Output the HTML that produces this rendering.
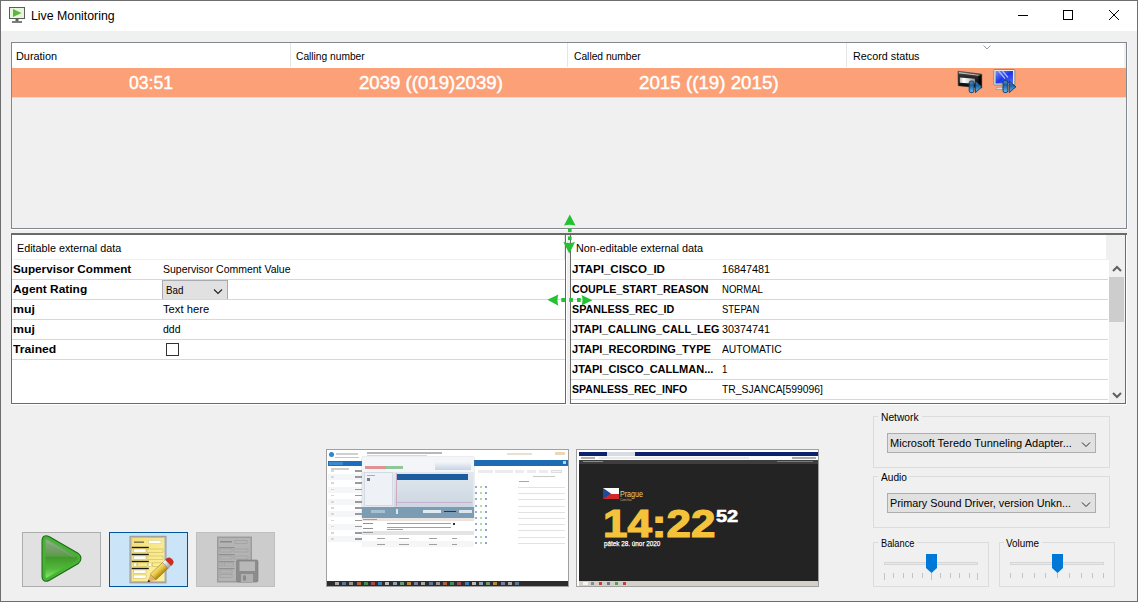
<!DOCTYPE html>
<html><head><meta charset="utf-8"><title>Live Monitoring</title>
<style>
*{margin:0;padding:0;box-sizing:border-box;}
html,body{width:1138px;height:602px;overflow:hidden;background:#f0f0f0;font-family:"Liberation Sans",sans-serif;}
.a{position:absolute;}
.t{position:absolute;white-space:nowrap;font-family:"Liberation Sans",sans-serif;}
.t{transform-origin:0 0;}

</style></head><body>
<!-- window frame -->
<div class="a" style="left:0;top:0;width:1138px;height:602px;border:1px solid #6e6e6e;"></div>
<div class="a" style="left:1px;top:1px;width:1136px;height:30px;background:#fff;"></div>
<!-- title icon -->
<svg class="a" style="left:9px;top:7px" width="16" height="16" viewBox="0 0 16 16">
  <rect x="0.5" y="0.5" width="15" height="11" fill="#e6f5dc" stroke="#5c5c5c"/>
  <path d="M4 2 L12.5 6 L4 10Z" fill="#5cb83c"/>
  <rect x="6.5" y="12" width="3" height="2" fill="#5c5c5c"/>
  <rect x="3" y="14.2" width="10" height="1.6" fill="#5c5c5c"/>
</svg>
<!-- caption buttons -->
<div class="a" style="left:1018px;top:15px;width:10px;height:1px;background:#000;"></div>
<div class="a" style="left:1063px;top:10px;width:10px;height:10px;border:1px solid #000;"></div>
<svg class="a" style="left:1108px;top:9px" width="12" height="12" viewBox="0 0 12 12"><path d="M1 1L11 11M11 1L1 11" stroke="#000" stroke-width="1"/></svg>

<!-- top list -->
<div class="a" style="left:11px;top:42px;width:1116px;height:187px;border:1px solid #828790;background:#f0f0f0;"></div>
<div class="a" style="left:12px;top:43px;width:1114px;height:25px;background:#fff;"></div>
<div class="a" style="left:290px;top:43px;width:1px;height:24px;background:#e5e5e5;"></div>
<div class="a" style="left:567px;top:43px;width:1px;height:24px;background:#e5e5e5;"></div>
<div class="a" style="left:846px;top:43px;width:1px;height:24px;background:#e5e5e5;"></div>
<svg class="a" style="left:983px;top:44.5px" width="8" height="5" viewBox="0 0 8 5"><path d="M0.5 0.5L4 4L7.5 0.5" fill="none" stroke="#9a9a9a" stroke-width="1"/></svg>
<div class="a" style="left:12px;top:68px;width:1114px;height:29px;background:#fba077;"></div>
<div class="a" style="left:12px;top:97px;width:1114px;height:1px;background:#ffd0d0;"></div>

<div class="a" style="left:11px;top:229px;width:1116px;height:1px;background:#fff;"></div>
<div class="a" style="left:1124px;top:43px;width:2px;height:25px;background:#f0f0f0;"></div>
<!-- lower frame top line -->
<div class="a" style="left:11px;top:233px;width:1116px;height:2px;background:#6a6a6a;"></div>
<div class="a" style="left:11px;top:404px;width:1116px;height:1px;background:#fff;"></div>
<div class="a" style="left:1126px;top:235px;width:1px;height:170px;background:#fff;"></div>
<div class="a" style="left:1127px;top:42px;width:1px;height:188px;background:#f8f8f8;"></div>
<!-- left panel -->
<div class="a" style="left:11px;top:233px;width:555px;height:171px;border:1px solid #6a6a6a;border-top-width:2px;background:#fff;"></div>
<div class="a" style="left:564px;top:235px;width:1px;height:24px;background:#e8e8e8;"></div>
<div class="a" style="left:12px;top:259px;width:553px;height:1px;background:#f0f0f0;"></div>
<!-- right panel -->
<div class="a" style="left:570px;top:233px;width:556px;height:171px;border:1px solid #6a6a6a;border-top-width:2px;background:#fff;"></div>
<div class="a" style="left:1106px;top:235px;width:19px;height:25px;background:#f0f0f0;"></div>
<div class="a" style="left:571px;top:259px;width:535px;height:1px;background:#f0f0f0;"></div>
<div class="a" style="left:1109px;top:260px;width:16px;height:143px;background:#f0f0f0;"></div>
<div class="a" style="left:1109px;top:277px;width:15px;height:45px;background:#cdcdcd;"></div>
<svg class="a" style="left:1112px;top:265px" width="10" height="8" viewBox="0 0 10 8"><path d="M1 6L5 2L9 6" fill="none" stroke="#606060" stroke-width="2"/></svg>
<svg class="a" style="left:1112px;top:391px" width="10" height="8" viewBox="0 0 10 8"><path d="M1 2L5 6L9 2" fill="none" stroke="#606060" stroke-width="2"/></svg>
<div class="a" style="left:12px;top:279px;width:553px;height:1px;background:#ffc8c8;"></div>
<div class="a" style="left:12px;top:299px;width:553px;height:1px;background:#ffc8c8;"></div>
<div class="a" style="left:12px;top:319px;width:553px;height:1px;background:#ffc8c8;"></div>
<div class="a" style="left:12px;top:339px;width:553px;height:1px;background:#ffc8c8;"></div>
<div class="a" style="left:12px;top:359px;width:553px;height:1px;background:#ffc8c8;"></div>
<div class="a" style="left:571px;top:279px;width:537px;height:1px;background:#ffc8c8;"></div>
<div class="a" style="left:571px;top:299px;width:537px;height:1px;background:#ffc8c8;"></div>
<div class="a" style="left:571px;top:319px;width:537px;height:1px;background:#ffc8c8;"></div>
<div class="a" style="left:571px;top:339px;width:537px;height:1px;background:#ffc8c8;"></div>
<div class="a" style="left:571px;top:359px;width:537px;height:1px;background:#ffc8c8;"></div>
<div class="a" style="left:571px;top:379px;width:537px;height:1px;background:#ffc8c8;"></div>
<div class="a" style="left:571px;top:399px;width:537px;height:1px;background:#ffc8c8;"></div>
<!-- combo Bad -->
<div class="a" style="left:162px;top:280px;width:66px;height:19px;background:#e1e1e1;border:1px solid #a9abb0;border-bottom:none;"></div>
<svg class="a" style="left:213px;top:288px" width="10" height="7" viewBox="0 0 10 7"><path d="M1 1.5L5 5.5L9 1.5" fill="none" stroke="#222" stroke-width="1.1"/></svg>
<!-- checkbox -->
<div class="a" style="left:166px;top:343px;width:13px;height:13px;border:1px solid #333;background:#fff;"></div>
<!-- splitter gap -->
<div class="a" style="left:566px;top:235px;width:4px;height:169px;background:#f0f0f0;"></div>
<div class="a" style="left:566px;top:235px;width:1px;height:169px;background:#fff;"></div>
<!-- group boxes -->
<div class="a" style="left:873px;top:416px;width:237px;height:52px;border:1px solid #dcdcdc;"></div>
<div class="a" style="left:878px;top:410px;width:44px;height:12px;background:#f0f0f0;"></div>
<div class="a" style="left:887px;top:433px;width:209px;height:20px;background:#e1e1e1;border:1px solid #adadad;"></div>
<svg class="a" style="left:1081px;top:441px" width="10" height="7" viewBox="0 0 10 7"><path d="M1 1.5L5 5.5L9 1.5" fill="none" stroke="#2a2a2a" stroke-width="1"/></svg>

<div class="a" style="left:873px;top:476px;width:237px;height:52px;border:1px solid #dcdcdc;"></div>
<div class="a" style="left:878px;top:470px;width:31px;height:12px;background:#f0f0f0;"></div>
<div class="a" style="left:887px;top:493px;width:209px;height:20px;background:#e1e1e1;border:1px solid #adadad;"></div>
<svg class="a" style="left:1081px;top:501px" width="10" height="7" viewBox="0 0 10 7"><path d="M1 1.5L5 5.5L9 1.5" fill="none" stroke="#2a2a2a" stroke-width="1"/></svg>

<div class="a" style="left:873px;top:542px;width:116px;height:45px;border:1px solid #dcdcdc;"></div>
<div class="a" style="left:878px;top:536px;width:39px;height:12px;background:#f0f0f0;"></div>
<div class="a" style="left:884px;top:562px;width:94px;height:3px;background:#e7eaea;border:1px solid #d6d6d6;"></div>
<svg class="a" style="left:926px;top:554px" width="11" height="19" viewBox="0 0 11 19"><path d="M0 0H11V14L5.5 19L0 14Z" fill="#0078d7"/></svg>

<div class="a" style="left:999px;top:542px;width:116px;height:45px;border:1px solid #dcdcdc;"></div>
<div class="a" style="left:1004px;top:536px;width:38px;height:12px;background:#f0f0f0;"></div>
<div class="a" style="left:1010px;top:562px;width:94px;height:3px;background:#e7eaea;border:1px solid #d6d6d6;"></div>
<svg class="a" style="left:1052px;top:554px" width="11" height="19" viewBox="0 0 11 19"><path d="M0 0H11V14L5.5 19L0 14Z" fill="#0078d7"/></svg>

<div class="a" style="left:884px;top:573px;width:1px;height:7px;background:#c4c4c4;"></div>
<div class="a" style="left:893px;top:573px;width:1px;height:5px;background:#c4c4c4;"></div>
<div class="a" style="left:903px;top:573px;width:1px;height:5px;background:#c4c4c4;"></div>
<div class="a" style="left:912px;top:573px;width:1px;height:5px;background:#c4c4c4;"></div>
<div class="a" style="left:922px;top:573px;width:1px;height:5px;background:#c4c4c4;"></div>
<div class="a" style="left:931px;top:573px;width:1px;height:7px;background:#c4c4c4;"></div>
<div class="a" style="left:940px;top:573px;width:1px;height:5px;background:#c4c4c4;"></div>
<div class="a" style="left:950px;top:573px;width:1px;height:5px;background:#c4c4c4;"></div>
<div class="a" style="left:959px;top:573px;width:1px;height:5px;background:#c4c4c4;"></div>
<div class="a" style="left:969px;top:573px;width:1px;height:5px;background:#c4c4c4;"></div>
<div class="a" style="left:977px;top:573px;width:1px;height:7px;background:#c4c4c4;"></div>
<div class="a" style="left:1010px;top:573px;width:1px;height:5px;background:#c4c4c4;"></div>
<div class="a" style="left:1022px;top:573px;width:1px;height:5px;background:#c4c4c4;"></div>
<div class="a" style="left:1034px;top:573px;width:1px;height:5px;background:#c4c4c4;"></div>
<div class="a" style="left:1045px;top:573px;width:1px;height:5px;background:#c4c4c4;"></div>
<div class="a" style="left:1057px;top:573px;width:1px;height:5px;background:#c4c4c4;"></div>
<div class="a" style="left:1069px;top:573px;width:1px;height:5px;background:#c4c4c4;"></div>
<div class="a" style="left:1081px;top:573px;width:1px;height:5px;background:#c4c4c4;"></div>
<div class="a" style="left:1092px;top:573px;width:1px;height:5px;background:#c4c4c4;"></div>
<div class="a" style="left:1103px;top:573px;width:1px;height:5px;background:#c4c4c4;"></div>
<!-- bottom buttons -->
<div class="a" style="left:22px;top:532px;width:79px;height:55px;background:#e1e1e1;border:1px solid #adadad;"></div>
<div class="a" style="left:109px;top:532px;width:79px;height:55px;background:#cce4f7;border:1px solid #005499;"></div>
<div class="a" style="left:196px;top:532px;width:79px;height:55px;background:#cccccc;border:1px solid #bfbfbf;"></div>

<!-- thumbnails -->
<div class="a" style="left:326px;top:449px;width:243px;height:138px;border:1px solid #a0a0a0;background:#fff;overflow:hidden;">
 <div class="a" style="left:2px;top:2px;width:5px;height:5px;border-radius:50%;background:#2f86c8;"></div>
 <div class="a" style="left:9px;top:3px;width:22px;height:2px;background:#d0d0d0;"></div>
 <div class="a" style="left:8px;top:7px;width:24px;height:1px;background:#c0c8d8;"></div>
 <div class="a" style="left:40px;top:2px;width:75px;height:1.5px;background:#b8b8b8;"></div>
 <div class="a" style="left:40px;top:5px;width:60px;height:1px;background:#d8d8d8;"></div>
 <div class="a" style="left:180px;top:3px;width:25px;height:2px;background:#e8e0d0;"></div>
 <div class="a" style="left:228px;top:2px;width:10px;height:3px;background:#e8d8b8;"></div>
 <div class="a" style="left:1px;top:11px;width:34px;height:5px;background:#1a6fbf;"></div>
 <div class="a" style="left:2px;top:12px;width:14px;height:3px;background:#3a8ad0;"></div>
 <div class="a" style="left:147px;top:10px;width:94px;height:6px;background:#1c6bb3;"></div>
 <div class="a" style="left:236px;top:11px;width:3px;height:3px;background:#b8d4ee;"></div>
 <div class="a" style="left:4px;top:18px;width:18px;height:2px;background:#cfcfcf;"></div>
 <div class="a" style="left:151px;top:20px;width:15px;height:3px;background:#ececec;"></div>
 <div class="a" style="left:168px;top:20px;width:18px;height:3px;background:#ececec;"></div>
 <div class="a" style="left:188px;top:20px;width:9px;height:3px;background:#ececec;"></div>
 <div class="a" style="left:200px;top:20px;width:9px;height:3px;background:#ececec;"></div>
 <div class="a" style="left:212px;top:20px;width:9px;height:3px;background:#ececec;"></div>
 <div class="a" style="left:224px;top:20px;width:11px;height:3px;background:#f4f4f4;border:0.5px solid #ddd;"></div>
 <div class="a" style="left:206px;top:26px;width:22px;height:1px;background:#c8c8c8;"></div>
 <div class="a" style="left:192px;top:31px;width:10px;height:1px;background:#a8a8a8;"></div>
 <div class="a" style="left:1px;top:24.2px;width:146px;height:6px;background:#f4f6f8;"></div>
 <div class="a" style="left:1px;top:36.6px;width:146px;height:6px;background:#f4f6f8;"></div>
 <div class="a" style="left:1px;top:49.0px;width:146px;height:6px;background:#f4f6f8;"></div>
 <div class="a" style="left:1px;top:61.4px;width:146px;height:6px;background:#f4f6f8;"></div>
 <div class="a" style="left:1px;top:73.8px;width:146px;height:6px;background:#f4f6f8;"></div>
 <div class="a" style="left:1px;top:86.2px;width:146px;height:6px;background:#f4f6f8;"></div>
 <div class="a" style="left:28px;top:20.0px;width:14px;height:1.5px;background:#9a9a9a;"></div>
 <div class="a" style="left:4px;top:20.0px;width:3px;height:1.5px;background:#d8d8d8;"></div>
 <div class="a" style="left:28px;top:26.2px;width:14px;height:1.5px;background:#9a9a9a;"></div>
 <div class="a" style="left:4px;top:26.2px;width:3px;height:1.5px;background:#d8d8d8;"></div>
 <div class="a" style="left:28px;top:32.4px;width:14px;height:1.5px;background:#9a9a9a;"></div>
 <div class="a" style="left:4px;top:32.4px;width:3px;height:1.5px;background:#d8d8d8;"></div>
 <div class="a" style="left:28px;top:38.6px;width:14px;height:1.5px;background:#9a9a9a;"></div>
 <div class="a" style="left:4px;top:38.6px;width:3px;height:1.5px;background:#d8d8d8;"></div>
 <div class="a" style="left:28px;top:44.8px;width:14px;height:1.5px;background:#9a9a9a;"></div>
 <div class="a" style="left:4px;top:44.8px;width:3px;height:1.5px;background:#d8d8d8;"></div>
 <div class="a" style="left:28px;top:51.0px;width:14px;height:1.5px;background:#9a9a9a;"></div>
 <div class="a" style="left:4px;top:51.0px;width:3px;height:1.5px;background:#d8d8d8;"></div>
 <div class="a" style="left:28px;top:57.2px;width:14px;height:1.5px;background:#9a9a9a;"></div>
 <div class="a" style="left:4px;top:57.2px;width:3px;height:1.5px;background:#d8d8d8;"></div>
 <div class="a" style="left:28px;top:63.4px;width:14px;height:1.5px;background:#9a9a9a;"></div>
 <div class="a" style="left:4px;top:63.4px;width:3px;height:1.5px;background:#d8d8d8;"></div>
 <div class="a" style="left:28px;top:69.6px;width:14px;height:1.5px;background:#9a9a9a;"></div>
 <div class="a" style="left:4px;top:69.6px;width:3px;height:1.5px;background:#d8d8d8;"></div>
 <div class="a" style="left:28px;top:75.8px;width:14px;height:1.5px;background:#9a9a9a;"></div>
 <div class="a" style="left:4px;top:75.8px;width:3px;height:1.5px;background:#d8d8d8;"></div>
 <div class="a" style="left:28px;top:82.0px;width:14px;height:1.5px;background:#9a9a9a;"></div>
 <div class="a" style="left:4px;top:82.0px;width:3px;height:1.5px;background:#d8d8d8;"></div>
 <div class="a" style="left:28px;top:88.2px;width:14px;height:1.5px;background:#9a9a9a;"></div>
 <div class="a" style="left:4px;top:88.2px;width:3px;height:1.5px;background:#d8d8d8;"></div>
 <div class="a" style="left:148px;top:36.0px;width:2px;height:2px;background:#4a78b0;opacity:0.6;"></div>
 <div class="a" style="left:153px;top:36.0px;width:2px;height:2px;background:#7ac07a;opacity:0.6;"></div>
 <div class="a" style="left:158px;top:36.0px;width:2px;height:2px;background:#3a6aa8;opacity:0.6;"></div>
 <div class="a" style="left:191px;top:37.0px;width:47px;height:1px;background:#e2e2e2;"></div>
 <div class="a" style="left:148px;top:42.2px;width:2px;height:2px;background:#4a78b0;opacity:0.6;"></div>
 <div class="a" style="left:153px;top:42.2px;width:2px;height:2px;background:#7ac07a;opacity:0.6;"></div>
 <div class="a" style="left:158px;top:42.2px;width:2px;height:2px;background:#3a6aa8;opacity:0.6;"></div>
 <div class="a" style="left:191px;top:43.2px;width:47px;height:1px;background:#e2e2e2;"></div>
 <div class="a" style="left:148px;top:48.4px;width:2px;height:2px;background:#4a78b0;opacity:0.6;"></div>
 <div class="a" style="left:153px;top:48.4px;width:2px;height:2px;background:#7ac07a;opacity:0.6;"></div>
 <div class="a" style="left:158px;top:48.4px;width:2px;height:2px;background:#3a6aa8;opacity:0.6;"></div>
 <div class="a" style="left:191px;top:49.4px;width:47px;height:1px;background:#e2e2e2;"></div>
 <div class="a" style="left:148px;top:54.6px;width:2px;height:2px;background:#4a78b0;opacity:0.6;"></div>
 <div class="a" style="left:153px;top:54.6px;width:2px;height:2px;background:#7ac07a;opacity:0.6;"></div>
 <div class="a" style="left:158px;top:54.6px;width:2px;height:2px;background:#3a6aa8;opacity:0.6;"></div>
 <div class="a" style="left:191px;top:55.6px;width:47px;height:1px;background:#e2e2e2;"></div>
 <div class="a" style="left:148px;top:60.8px;width:2px;height:2px;background:#4a78b0;opacity:0.6;"></div>
 <div class="a" style="left:153px;top:60.8px;width:2px;height:2px;background:#7ac07a;opacity:0.6;"></div>
 <div class="a" style="left:158px;top:60.8px;width:2px;height:2px;background:#3a6aa8;opacity:0.6;"></div>
 <div class="a" style="left:191px;top:61.8px;width:47px;height:1px;background:#e2e2e2;"></div>
 <div class="a" style="left:148px;top:67.0px;width:2px;height:2px;background:#4a78b0;opacity:0.6;"></div>
 <div class="a" style="left:153px;top:67.0px;width:2px;height:2px;background:#7ac07a;opacity:0.6;"></div>
 <div class="a" style="left:158px;top:67.0px;width:2px;height:2px;background:#3a6aa8;opacity:0.6;"></div>
 <div class="a" style="left:191px;top:68.0px;width:47px;height:1px;background:#e2e2e2;"></div>
 <div class="a" style="left:148px;top:73.2px;width:2px;height:2px;background:#4a78b0;opacity:0.6;"></div>
 <div class="a" style="left:153px;top:73.2px;width:2px;height:2px;background:#7ac07a;opacity:0.6;"></div>
 <div class="a" style="left:158px;top:73.2px;width:2px;height:2px;background:#3a6aa8;opacity:0.6;"></div>
 <div class="a" style="left:191px;top:74.2px;width:47px;height:1px;background:#e2e2e2;"></div>
 <div class="a" style="left:148px;top:79.4px;width:2px;height:2px;background:#4a78b0;opacity:0.6;"></div>
 <div class="a" style="left:153px;top:79.4px;width:2px;height:2px;background:#7ac07a;opacity:0.6;"></div>
 <div class="a" style="left:158px;top:79.4px;width:2px;height:2px;background:#3a6aa8;opacity:0.6;"></div>
 <div class="a" style="left:191px;top:80.4px;width:47px;height:1px;background:#e2e2e2;"></div>
 <div class="a" style="left:148px;top:85.6px;width:2px;height:2px;background:#4a78b0;opacity:0.6;"></div>
 <div class="a" style="left:153px;top:85.6px;width:2px;height:2px;background:#7ac07a;opacity:0.6;"></div>
 <div class="a" style="left:158px;top:85.6px;width:2px;height:2px;background:#3a6aa8;opacity:0.6;"></div>
 <div class="a" style="left:191px;top:86.6px;width:47px;height:1px;background:#e2e2e2;"></div>
 <div class="a" style="left:148px;top:91.8px;width:2px;height:2px;background:#4a78b0;opacity:0.6;"></div>
 <div class="a" style="left:153px;top:91.8px;width:2px;height:2px;background:#7ac07a;opacity:0.6;"></div>
 <div class="a" style="left:158px;top:91.8px;width:2px;height:2px;background:#3a6aa8;opacity:0.6;"></div>
 <div class="a" style="left:191px;top:92.8px;width:47px;height:1px;background:#e2e2e2;"></div>
 <div class="a" style="left:35px;top:7px;width:112px;height:62px;background:#e4eaf0;box-shadow:0 0 1px #8a9aa8;"></div>
 <div class="a" style="left:35px;top:7px;width:112px;height:15px;background:#f3f5f8;"></div>
 <div class="a" style="left:38px;top:15.5px;width:21px;height:3px;background:#d65050;opacity:0.6;"></div>
 <div class="a" style="left:59px;top:15.5px;width:17px;height:3px;background:#50a858;opacity:0.6;"></div>
 <div class="a" style="left:108px;top:12px;width:36px;height:8px;background:linear-gradient(#f3f5f8,#c6d4e4);"></div>
 <div class="a" style="left:37px;top:22px;width:29px;height:34px;background:#eef2f6;border:1px solid #d4dae2;"></div>
 <div class="a" style="left:40px;top:25px;width:8px;height:1px;background:#aab;"></div>
 <div class="a" style="left:40px;top:28px;width:3px;height:3px;background:#778;"></div>
 <div class="a" style="left:67px;top:22px;width:79px;height:35px;background:linear-gradient(#e2e8ee,#cbd6e0);"></div>
 <div class="a" style="left:69px;top:23px;width:1px;height:33px;background:#d0a8c0;"></div>
 <div class="a" style="left:70px;top:24px;width:71px;height:6px;background:#1b5d9f;"></div>
 <div class="a" style="left:69px;top:52px;width:76px;height:1px;background:#c8b0d0;"></div>
 <div class="a" style="left:35px;top:57px;width:112px;height:11px;background:#7c9cb4;"></div>
 <div class="a" style="left:44px;top:60px;width:14px;height:3px;background:#a8c0d0;"></div>
 <div class="a" style="left:69px;top:59px;width:2px;height:5px;background:#d8e4ee;"></div>
 <div class="a" style="left:96px;top:60px;width:18px;height:3px;background:#e0eaf2;"></div>
 <div class="a" style="left:117px;top:61px;width:12px;height:1px;background:#1c3c58;"></div>
 <div class="a" style="left:132px;top:60px;width:13px;height:3px;background:#d8e4ee;"></div>
 <div class="a" style="left:35px;top:68px;width:112px;height:3px;background:#ebe3df;"></div>
 <div class="a" style="left:36px;top:69px;width:14px;height:1px;background:#a0a0a0;"></div>
 <div class="a" style="left:35px;top:71px;width:112px;height:10px;background:#fff;"></div>
 <div class="a" style="left:36px;top:73px;width:10px;height:1px;background:#909090;"></div>
 <div class="a" style="left:36px;top:78px;width:10px;height:1px;background:#909090;"></div>
 <div class="a" style="left:60px;top:73px;width:64px;height:1px;background:#a0a0a0;"></div>
 <div class="a" style="left:60px;top:77px;width:64px;height:1px;background:#a0a0a0;"></div>
 <div class="a" style="left:60px;top:79px;width:16px;height:1px;background:#a0a0a0;"></div>
 <div class="a" style="left:126px;top:73px;width:2px;height:2px;background:#333;"></div>
 <div class="a" style="left:35px;top:81px;width:112px;height:4px;background:#e4e4e4;"></div>
 <div class="a" style="left:36px;top:82px;width:10px;height:1px;background:#999;"></div>
 <div class="a" style="left:35px;top:85px;width:112px;height:12px;background:#fff;"></div>
 <div class="a" style="left:35px;top:91px;width:112px;height:6px;background:#f4f6f8;"></div>
 <div class="a" style="left:50px;top:88px;width:8px;height:1px;background:#a0a0a0;"></div>
 <div class="a" style="left:72px;top:88px;width:10px;height:1px;background:#a0a0a0;"></div>
 <div class="a" style="left:102px;top:88px;width:8px;height:1px;background:#a0a0a0;"></div>
 <div class="a" style="left:125px;top:88px;width:5px;height:1px;background:#a0a0a0;"></div>
 <div class="a" style="left:50px;top:94px;width:8px;height:1px;background:#a0a0a0;"></div>
 <div class="a" style="left:72px;top:94px;width:10px;height:1px;background:#a0a0a0;"></div>
 <div class="a" style="left:102px;top:94px;width:8px;height:1px;background:#a0a0a0;"></div>
 <div class="a" style="left:125px;top:94px;width:5px;height:1px;background:#a0a0a0;"></div>
 <div class="a" style="left:0px;top:131px;width:241px;height:5px;background:#2c2c2c;"></div>
 <div class="a" style="left:8.0px;top:132px;width:4px;height:3px;background:#c8c8c8;opacity:0.8;"></div>
 <div class="a" style="left:15.2px;top:132px;width:4px;height:3px;background:#6a8ab0;opacity:0.8;"></div>
 <div class="a" style="left:22.4px;top:132px;width:4px;height:3px;background:#b0b0b0;opacity:0.8;"></div>
 <div class="a" style="left:29.6px;top:132px;width:4px;height:3px;background:#d07040;opacity:0.8;"></div>
 <div class="a" style="left:36.8px;top:132px;width:4px;height:3px;background:#50a060;opacity:0.8;"></div>
 <div class="a" style="left:44.0px;top:132px;width:4px;height:3px;background:#c05050;opacity:0.8;"></div>
 <div class="a" style="left:51.2px;top:132px;width:4px;height:3px;background:#4a90d0;opacity:0.8;"></div>
 <div class="a" style="left:58.4px;top:132px;width:4px;height:3px;background:#e0e0e0;opacity:0.8;"></div>
 <div class="a" style="left:65.6px;top:132px;width:4px;height:3px;background:#a0c0e0;opacity:0.8;"></div>
 <div class="a" style="left:72.8px;top:132px;width:4px;height:3px;background:#80b080;opacity:0.8;"></div>
 <div class="a" style="left:80.0px;top:132px;width:4px;height:3px;background:#d8a040;opacity:0.8;"></div>
 <div class="a" style="left:87.2px;top:132px;width:4px;height:3px;background:#9090c0;opacity:0.8;"></div>
 <div class="a" style="left:94.4px;top:132px;width:4px;height:3px;background:#c8c8c8;opacity:0.8;"></div>
 <div class="a" style="left:101.6px;top:132px;width:4px;height:3px;background:#6a8ab0;opacity:0.8;"></div>
 <div class="a" style="left:108.8px;top:132px;width:4px;height:3px;background:#b0b0b0;opacity:0.8;"></div>
 <div class="a" style="left:116.0px;top:132px;width:4px;height:3px;background:#d07040;opacity:0.8;"></div>
 <div class="a" style="left:123.2px;top:132px;width:4px;height:3px;background:#50a060;opacity:0.8;"></div>
 <div class="a" style="left:130.4px;top:132px;width:4px;height:3px;background:#c05050;opacity:0.8;"></div>
 <div class="a" style="left:137.6px;top:132px;width:4px;height:3px;background:#4a90d0;opacity:0.8;"></div>
 <div class="a" style="left:144.8px;top:132px;width:4px;height:3px;background:#e0e0e0;opacity:0.8;"></div>
 <div class="a" style="left:152.0px;top:132px;width:4px;height:3px;background:#a0c0e0;opacity:0.8;"></div>
 <div class="a" style="left:159.2px;top:132px;width:4px;height:3px;background:#80b080;opacity:0.8;"></div>
 <div class="a" style="left:166.4px;top:132px;width:4px;height:3px;background:#d8a040;opacity:0.8;"></div>
 <div class="a" style="left:173.6px;top:132px;width:4px;height:3px;background:#9090c0;opacity:0.8;"></div>
 <div class="a" style="left:180.8px;top:132px;width:4px;height:3px;background:#c8c8c8;opacity:0.8;"></div>
 <div class="a" style="left:188.0px;top:132px;width:4px;height:3px;background:#6a8ab0;opacity:0.8;"></div>
</div>
<div class="a" style="left:576px;top:449px;width:243px;height:138px;border:1px solid #a0a0a0;background:#fff;overflow:hidden;">
 <div class="a" style="left:2px;top:2px;width:239px;height:4px;background:#0c226e;"></div>
 <div class="a" style="left:30px;top:2px;width:28px;height:4px;background:#d8dce4;"></div>
 <div class="a" style="left:2px;top:6px;width:239px;height:4px;background:#fafafa;"></div>
 <div class="a" style="left:4px;top:7px;width:14px;height:2px;background:#b0b0b0;"></div>
 <div class="a" style="left:22px;top:7px;width:150px;height:2px;background:#e8e8e8;"></div>
 <div class="a" style="left:215px;top:7px;width:24px;height:2px;background:#a8a8a8;"></div>
 <div class="a" style="left:2px;top:10px;width:239px;height:4px;background:#3e3e3e;"></div>
 <div class="a" style="left:6px;top:11px;width:20px;height:1px;background:#8a8a8a;"></div>
 <div class="a" style="left:200px;top:11px;width:36px;height:1px;background:#7a7a7a;"></div>
 <div class="a" style="left:2px;top:14px;width:239px;height:117px;background:#232323;"></div>
 <div class="a" style="left:2px;top:131px;width:239px;height:5px;background:#d4d0c8;"></div>
 <div class="a" style="left:14px;top:132px;width:3px;height:3px;background:#888;"></div>
 <div class="a" style="left:22px;top:132px;width:3px;height:3px;background:#c04040;"></div>
 <div class="a" style="left:30px;top:132px;width:3px;height:3px;background:#777;"></div>
 <div class="a" style="left:38px;top:132px;width:3px;height:3px;background:#50a050;"></div>
 <div class="a" style="left:46px;top:132px;width:3px;height:3px;background:#c04040;"></div>
 <div class="a" style="left:6px;top:132px;width:5px;height:3px;background:#f4f4f4;"></div>
 <div class="a" style="left:26px;top:38px;width:16px;height:11px;background:linear-gradient(#fafafa 0,#fafafa 50%,#d02828 50%,#d02828 100%);"></div>
 <svg class="a" style="left:26px;top:38px" width="9" height="11"><path d="M0 0L8 5.5L0 11Z" fill="#1e4a9a"/></svg>
</div>
<!-- record status icons -->
<svg class="a" style="left:954px;top:66px" width="32" height="32" viewBox="0 0 32 32">
  <defs>
    <linearGradient id="bv" x1="0" y1="0" x2="0" y2="1"><stop offset="0" stop-color="#5a8fc0"/><stop offset="0.35" stop-color="#1d5f9f"/><stop offset="1" stop-color="#5ebcf5"/></linearGradient>
    <linearGradient id="cas" x1="0" y1="0" x2="0" y2="1"><stop offset="0" stop-color="#b0b0b0"/><stop offset="0.18" stop-color="#3a3a3a"/><stop offset="0.5" stop-color="#1a1a1a"/><stop offset="1" stop-color="#0c0c0c"/></linearGradient>
    <linearGradient id="reel" x1="0" y1="0" x2="1" y2="0"><stop offset="0" stop-color="#bdbdbd"/><stop offset="0.25" stop-color="#ffffff"/><stop offset="0.6" stop-color="#d8d8d8"/><stop offset="1" stop-color="#8a8a8a"/></linearGradient>
  </defs>
  <path d="M4 5.3 L27.7 8.2 L27.7 22 L4.3 19.7 Z" fill="url(#cas)" stroke="#222" stroke-width="0.6"/>
  <path d="M5 6.8 L26.5 9.5" stroke="#d0d0d0" stroke-width="0.9"/>
  <path d="M24.5 9.5 L27.3 9 L27.3 21.5 L24.5 21 Z" fill="#050505"/>
  <path d="M5.8 11.5 L21 12.8 L21 17.8 L5.8 16.8 Z" fill="url(#reel)"/>
  <rect x="15.2" y="15" width="4.8" height="11.6" rx="1.8" fill="url(#bv)" stroke="#0f3a68" stroke-width="0.9"/>
  <path d="M21.4 15.2 L28 20.8 L21.4 26.6 Z" fill="url(#bv)" stroke="#0f3a68" stroke-width="0.9" stroke-linejoin="round"/>
</svg>
<svg class="a" style="left:990px;top:66px" width="32" height="32" viewBox="0 0 32 32">
  <defs>
    <linearGradient id="scr" x1="0" y1="0" x2="1" y2="1"><stop offset="0" stop-color="#7a90f0"/><stop offset="0.5" stop-color="#1e36e8"/><stop offset="1" stop-color="#5870ee"/></linearGradient>
  </defs>
  <rect x="3.8" y="3.5" width="21" height="15.5" rx="0.8" fill="#e8e8e8" stroke="#7a7a7a" stroke-width="0.8"/>
  <rect x="5.5" y="5" width="17.5" height="12.5" fill="url(#scr)"/>
  <path d="M8.5 5 L15 12.5 M12.5 5 L18 11.5" stroke="#a8b8ff" stroke-width="1.3"/>
  <path d="M11 19 L13.5 19 L13.5 21 L6.5 21.5 L5.8 23.5 L13.5 23.5 Z" fill="#dcdcdc" stroke="#8a8a8a" stroke-width="0.6"/>
  <rect x="13" y="14.6" width="4.8" height="12" rx="1.8" fill="url(#bv)" stroke="#0f3a68" stroke-width="0.9"/>
  <path d="M19.2 15 L26 20.8 L19.2 26.6 Z" fill="url(#bv)" stroke="#0f3a68" stroke-width="0.9" stroke-linejoin="round"/>
</svg>
<!-- play icon -->
<svg class="a" style="left:35px;top:532px" width="50" height="54" viewBox="0 0 50 54">
  <defs>
    <linearGradient id="pg" x1="0" y1="0" x2="0" y2="1">
      <stop offset="0" stop-color="#92aa8c"/><stop offset="0.44" stop-color="#5d9a4c"/>
      <stop offset="0.47" stop-color="#3f9a28"/><stop offset="0.75" stop-color="#52b83a"/><stop offset="1" stop-color="#8cf06c"/>
    </linearGradient>
  </defs>
  <path d="M9 9 Q9 4 13.5 6.5 L42 23 Q46 26.5 42 30 L13.5 46.5 Q9 49 9 44 Z" fill="none" stroke="#1c6a15" stroke-width="5" stroke-linejoin="round"/>
  <path d="M9 9 Q9 4 13.5 6.5 L42 23 Q46 26.5 42 30 L13.5 46.5 Q9 49 9 44 Z" fill="url(#pg)" stroke="#48b236" stroke-width="3" stroke-linejoin="round"/>
  <path d="M12 9.5 L40 25.5" stroke="#a8d8a0" stroke-width="0.8" opacity="0.3"/>
</svg>
<!-- edit form icon -->
<svg class="a" style="left:126px;top:533px" width="50" height="52" viewBox="0 0 50 52">
  <defs>
    <linearGradient id="yf" x1="0" y1="0" x2="1" y2="1"><stop offset="0" stop-color="#f3df78"/><stop offset="1" stop-color="#fdf2a0"/></linearGradient>
    <linearGradient id="pen" x1="0" y1="0" x2="0" y2="1"><stop offset="0" stop-color="#f8e27a"/><stop offset="0.45" stop-color="#e8c440"/><stop offset="1" stop-color="#a88418"/></linearGradient>
    <linearGradient id="fer" x1="0" y1="0" x2="0" y2="1"><stop offset="0" stop-color="#ffffff"/><stop offset="1" stop-color="#a0a0a0"/></linearGradient>
  </defs>
  <rect x="3.5" y="2.8" width="37" height="47.5" fill="#9a9a9a"/>
  <rect x="4.5" y="3.8" width="35" height="45.5" fill="#bcbcbc"/>
  <rect x="5.8" y="5" width="32.5" height="43" fill="url(#yf)"/>
  <rect x="8" y="8.5" width="10" height="1.3" fill="#6a6040"/>
  <rect x="22.5" y="7.3" width="12.5" height="3.2" fill="#fff" stroke="#d6c878" stroke-width="0.5"/>
  <g fill="#1a1a1a">
    <rect x="5.8" y="13.8" width="17" height="1.4"/><rect x="5.8" y="20.8" width="17" height="1.4"/>
    <rect x="5.8" y="27.8" width="17" height="1.4"/><rect x="5.8" y="34.8" width="17" height="1.4"/>
  </g>
  <g fill="#fff" stroke="#c8b860" stroke-width="0.5">
    <rect x="7.5" y="16" width="12.5" height="3.2"/><rect x="7.5" y="23" width="12.5" height="3.2"/>
    <rect x="7.5" y="30" width="3.2" height="3.2"/><rect x="22.5" y="30" width="3.2" height="3.2"/>
    <rect x="7.5" y="37" width="12.5" height="3.2"/><rect x="7.5" y="42" width="12.5" height="3.2"/>
  </g>
  <g fill="none" stroke="#cdbb5a" stroke-width="0.6">
    <rect x="21" y="16" width="16" height="3.5"/><rect x="21" y="23" width="16" height="3.5"/>
    <rect x="11.5" y="29.8" width="10" height="3.5"/><rect x="26.5" y="29.8" width="10.5" height="3.5"/>
  </g>
  <g transform="translate(21.6 49.2) rotate(-43.4)">
    <path d="M0 0 L7.5 -4 L7.5 4 Z" fill="#e8b070"/>
    <path d="M0 0 L2.6 -1.4 L2.6 1.4 Z" fill="#2a2a2a"/>
    <rect x="7.5" y="-4" width="17" height="8" fill="url(#pen)" stroke="#8a6c10" stroke-width="0.5"/>
    <rect x="24.5" y="-4" width="4" height="8" fill="url(#fer)" stroke="#888" stroke-width="0.4"/>
    <path d="M28.5 -4 L30.5 -4 Q33.5 -3.5 33.5 0 Q33.5 3.5 30.5 4 L28.5 4 Z" fill="#d42a1c" stroke="#9a1a10" stroke-width="0.4"/>
  </g>
</svg>
<!-- save form icon (disabled) -->
<svg class="a" style="left:213px;top:533px" width="50" height="52" viewBox="0 0 50 52">
  <rect x="4" y="3.5" width="35" height="46" fill="#9c9c9c"/>
  <rect x="5.5" y="5" width="32" height="43" fill="#b4b4b4"/>
  <rect x="7" y="8" width="12" height="1.5" fill="#8a8a8a"/>
  <rect x="22" y="7.5" width="12" height="3" fill="none" stroke="#999" stroke-width="0.6"/>
  <g fill="#909090">
    <rect x="5.5" y="14" width="16" height="1.2"/><rect x="5.5" y="21" width="16" height="1.2"/>
    <rect x="5.5" y="28" width="16" height="1.2"/><rect x="5.5" y="35" width="16" height="1.2"/>
  </g>
  <g fill="none" stroke="#9c9c9c" stroke-width="0.6">
    <rect x="7" y="16" width="12" height="3"/><rect x="21" y="16" width="14" height="3"/>
    <rect x="7" y="23" width="12" height="3"/><rect x="21" y="23" width="14" height="3"/>
    <rect x="7" y="30" width="3" height="3"/><rect x="11.5" y="30" width="9" height="3"/>
    <rect x="7" y="37" width="12" height="3"/><rect x="7" y="41.5" width="12" height="3"/>
  </g>
  <rect x="23.5" y="27" width="21.5" height="22" rx="1.5" fill="#8c8c8c" stroke="#7a7a7a" stroke-width="0.6"/>
  <rect x="26.5" y="28.5" width="15.5" height="9.5" fill="#b8b8b8"/>
  <rect x="28" y="41" width="12" height="8" fill="#b0b0b0"/>
  <rect x="30" y="42.5" width="3" height="5" fill="#8a8a8a"/>
</svg>

<span class="t" style="left:30.50px;top:8.84px;font-size:12px;line-height:14px;color:#000;transform:scaleX(1.0285);">Live Monitoring</span>
<span class="t" style="left:16.00px;top:49.69px;font-size:11px;line-height:13px;color:#000;transform:scaleX(0.9889);">Duration</span>
<span class="t" style="left:296.00px;top:49.69px;font-size:11px;line-height:13px;color:#000;transform:scaleX(0.9284);">Calling number</span>
<span class="t" style="left:574.00px;top:49.69px;font-size:11px;line-height:13px;color:#000;transform:scaleX(0.9322);">Called number</span>
<span class="t" style="left:852.50px;top:49.69px;font-size:11px;line-height:13px;color:#000;transform:scaleX(0.9801);">Record status</span>
<span class="t" style="left:128.50px;top:71.76px;font-size:18px;line-height:22px;color:#fff;transform:scaleX(0.9771);-webkit-text-stroke:0.45px #fff;">03:51</span>
<span class="t" style="left:358.50px;top:71.76px;font-size:18px;line-height:22px;color:#fff;transform:scaleX(1.0340);-webkit-text-stroke:0.45px #fff;">2039 ((019)2039)</span>
<span class="t" style="left:638.50px;top:71.76px;font-size:18px;line-height:22px;color:#fff;transform:scaleX(1.0414);-webkit-text-stroke:0.45px #fff;">2015 ((19) 2015)</span>
<span class="t" style="left:16.50px;top:241.69px;font-size:11px;line-height:13px;color:#000;transform:scaleX(0.9787);">Editable external data</span>
<span class="t" style="left:575.50px;top:241.69px;font-size:11px;line-height:13px;color:#000;transform:scaleX(0.9853);">Non-editable external data</span>
<span class="t" style="left:13.00px;top:262.69px;font-size:11px;line-height:13px;color:#000;transform:scaleX(1.0629);font-weight:bold;">Supervisor Comment</span>
<span class="t" style="left:13.00px;top:282.69px;font-size:11px;line-height:13px;color:#000;transform:scaleX(1.0839);font-weight:bold;">Agent Rating</span>
<span class="t" style="left:13.00px;top:302.69px;font-size:11px;line-height:13px;color:#000;transform:scaleX(1.1179);font-weight:bold;">muj</span>
<span class="t" style="left:13.00px;top:322.69px;font-size:11px;line-height:13px;color:#000;transform:scaleX(1.1179);font-weight:bold;">muj</span>
<span class="t" style="left:13.00px;top:342.69px;font-size:11px;line-height:13px;color:#000;transform:scaleX(1.1067);font-weight:bold;">Trained</span>
<span class="t" style="left:162.50px;top:262.69px;font-size:11px;line-height:13px;color:#000;transform:scaleX(0.9538);">Supervisor Comment Value</span>
<span class="t" style="left:165.70px;top:283.69px;font-size:11px;line-height:13px;color:#000;transform:scaleX(0.8893);">Bad</span>
<span class="t" style="left:162.80px;top:302.69px;font-size:11px;line-height:13px;color:#000;transform:scaleX(1.0193);">Text here</span>
<span class="t" style="left:162.80px;top:322.69px;font-size:11px;line-height:13px;color:#000;transform:scaleX(0.9542);">ddd</span>
<span class="t" style="left:572.20px;top:262.69px;font-size:11px;line-height:13px;color:#000;transform:scaleX(1.0510);font-weight:bold;">JTAPI_CISCO_ID</span>
<span class="t" style="left:722.00px;top:262.69px;font-size:11px;line-height:13px;color:#000;transform:scaleX(0.9811);">16847481</span>
<span class="t" style="left:572.20px;top:282.69px;font-size:11px;line-height:13px;color:#000;transform:scaleX(0.9685);font-weight:bold;">COUPLE_START_REASON</span>
<span class="t" style="left:722.00px;top:282.69px;font-size:11px;line-height:13px;color:#000;transform:scaleX(0.8691);">NORMAL</span>
<span class="t" style="left:572.20px;top:302.69px;font-size:11px;line-height:13px;color:#000;transform:scaleX(0.9753);font-weight:bold;">SPANLESS_REC_ID</span>
<span class="t" style="left:722.00px;top:302.69px;font-size:11px;line-height:13px;color:#000;transform:scaleX(0.8624);">STEPAN</span>
<span class="t" style="left:572.20px;top:322.69px;font-size:11px;line-height:13px;color:#000;transform:scaleX(0.9854);font-weight:bold;">JTAPI_CALLING_CALL_LEG</span>
<span class="t" style="left:722.00px;top:322.69px;font-size:11px;line-height:13px;color:#000;transform:scaleX(0.9811);">30374741</span>
<span class="t" style="left:572.20px;top:342.69px;font-size:11px;line-height:13px;color:#000;transform:scaleX(1.0021);font-weight:bold;">JTAPI_RECORDING_TYPE</span>
<span class="t" style="left:722.00px;top:342.69px;font-size:11px;line-height:13px;color:#000;transform:scaleX(0.9355);">AUTOMATIC</span>
<span class="t" style="left:572.20px;top:362.69px;font-size:11px;line-height:13px;color:#000;transform:scaleX(1.0027);font-weight:bold;">JTAPI_CISCO_CALLMAN...</span>
<span class="t" style="left:722.00px;top:362.69px;font-size:11px;line-height:13px;color:#000;transform:scaleX(0.8833);">1</span>
<span class="t" style="left:572.20px;top:382.69px;font-size:11px;line-height:13px;color:#000;transform:scaleX(0.9581);font-weight:bold;">SPANLESS_REC_INFO</span>
<span class="t" style="left:722.00px;top:382.69px;font-size:11px;line-height:13px;color:#000;transform:scaleX(0.9435);">TR_SJANCA[599096]</span>
<span class="t" style="left:880.50px;top:410.69px;font-size:11px;line-height:13px;color:#000;transform:scaleX(0.9304);">Network</span>
<span class="t" style="left:889.80px;top:436.69px;font-size:11px;line-height:13px;color:#000;transform:scaleX(1.0024);">Microsoft Teredo Tunneling Adapter...</span>
<span class="t" style="left:880.70px;top:470.69px;font-size:11px;line-height:13px;color:#000;transform:scaleX(0.9209);">Audio</span>
<span class="t" style="left:889.80px;top:496.69px;font-size:11px;line-height:13px;color:#000;transform:scaleX(0.9834);">Primary Sound Driver, version Unkn...</span>
<span class="t" style="left:880.50px;top:536.69px;font-size:11px;line-height:13px;color:#000;transform:scaleX(0.8402);">Balance</span>
<span class="t" style="left:1006.00px;top:536.69px;font-size:11px;line-height:13px;color:#000;transform:scaleX(0.8996);">Volume</span>
<span class="t" style="left:602.59px;top:501.33px;font-size:38px;line-height:46px;color:#f5c33b;transform:scaleX(1.1557);font-weight:bold;-webkit-text-stroke:1.2px #f5c33b;">14:22</span>
<span class="t" style="left:715.60px;top:507.31px;font-size:17px;line-height:20px;color:#fff;transform:scaleX(1.1759);font-weight:bold;-webkit-text-stroke:0.6px #fff;">52</span>
<span class="t" style="left:604.00px;top:539.10px;font-size:7.5px;line-height:9px;color:#fff;transform:scaleX(0.8445);-webkit-text-stroke:0.25px #fff;">pátek 28. únor 2020</span>
<span class="t" style="left:619.80px;top:488.55px;font-size:8.5px;line-height:10px;color:#f0d070;transform:scaleX(0.8381);">Prague</span>
<span class="t" style="left:620.00px;top:496.61px;font-size:4px;line-height:5px;color:#c8b070;transform:scaleX(0.7881);">Czechia</span>
<!-- splitter arrows -->
<svg class="a" style="left:560px;top:212px" width="20" height="44" viewBox="0 0 20 44">
  <path d="M9.8 2.5 L15.5 13.5 Q9.8 12 4 13.5 Z" fill="#22c231"/>
  <rect x="8" y="16.5" width="3.6" height="3.6" fill="#22c231"/>
  <rect x="8" y="24.5" width="3.6" height="3.6" fill="#22c231"/>
  <path d="M3.3 30 Q9.3 32 15 30 L9.3 41.5 Z" fill="#22c231"/>
</svg>
<svg class="a" style="left:545px;top:290px" width="50" height="20" viewBox="0 0 50 20">
  <path d="M2.4 9.7 L13.4 4.5 Q11.5 9.8 13.4 15.8 Z" fill="#22c231"/>
  <rect x="16.3" y="8" width="3.7" height="4" fill="#22c231"/>
  <rect x="24.2" y="8" width="3.7" height="4" fill="#22c231"/>
  <rect x="32" y="8" width="3.7" height="4" fill="#22c231"/>
  <path d="M36.5 5 L47.4 10.2 L36.5 15.5 Q38.5 10 36.5 5 Z" fill="#22c231"/>
</svg>

</body></html>
